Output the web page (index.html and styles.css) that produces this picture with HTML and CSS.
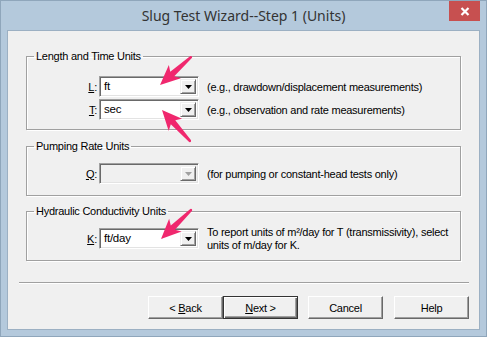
FILE: index.html
```html
<!DOCTYPE html>
<html lang="en">
<head>
<meta charset="UTF-8">
<title>Slug Test Wizard--Step 1 (Units)</title>
<link rel="stylesheet" href="styles.css">
</head>
<body>
<div class="window">
    <div class="titleBar">
        <span></span>
        <div class="title">Slug Test Wizard--Step 1 (Units)</div>
        <div class="closeBtn">
            <svg width="10" height="9" viewBox="0 0 10 9"><path d="M1.5,1 L8.5,8 M8.5,1 L1.5,8" stroke="#fff" stroke-width="2.2"/></svg>
        </div>
    </div>
    <div class="client">
        <!-- 길이/시간 단위 -->
        <fieldset class="group g1">
            <legend>Length and Time Units</legend>
            <div class="row">
                <span class="key"><u>L</u>:</span>
                <div class="combo"><span class="value">ft</span><span class="dropBtn"><svg width="7" height="4"><polygon points="0,0 7,0 3.5,4" class="tri"/></svg></span></div>
                <span class="hint">(e.g., drawdown/displacement measurements)</span>
            </div>
            <div class="row">
                <span class="key"><u>T</u>:</span>
                <div class="combo"><span class="value">sec</span><span class="dropBtn"><svg width="7" height="4"><polygon points="0,0 7,0 3.5,4" class="tri"/></svg></span></div>
                <span class="hint">(e.g., observation and rate measurements)</span>
            </div>
        </fieldset>
        <fieldset class="group g2">
            <legend>Pumping Rate Units</legend>
            <div class="row">
                <span class="key"><u>Q</u>:</span>
                <div class="combo disabled"><span class="value"></span><span class="dropBtn"><svg width="7" height="4"><polygon points="0,0 7,0 3.5,4" class="tri"/></svg></span></div>
                <span class="hint">(for pumping or constant-head tests only)</span>
            </div>
        </fieldset>
        <fieldset class="group g3">
            <legend>Hydraulic Conductivity Units</legend>
            <div class="row">
                <span class="key"><u>K</u>:</span>
                <div class="combo"><span class="value">ft/day</span><span class="dropBtn"><svg width="7" height="4"><polygon points="0,0 7,0 3.5,4" class="tri"/></svg></span></div>
                <span class="hint twoLine">To report units of m²/day for T (transmissivity), select<br>units of m/day for K.</span>
            </div>
        </fieldset>
        <div class="separator"></div>
        <div class="buttons">
            <button class="btn">&lt; <u>B</u>ack</button>
            <button class="btn default"><u>N</u>ext &gt;</button>
            <button class="btn cancel">Cancel</button>
            <button class="btn help">Help</button>
        </div>
    </div>
    <!-- 핑크 화살표 (덧그림) -->
    <svg class="arrows" width="487" height="337" viewBox="0 0 487 337">
        <path transform="translate(160,85) rotate(-42)" d="M0,0 L20,-9 L16.5,-3 L42,-1.3 Q44,0 42,1.3 L16.5,3 L20,9 Z"/>
        <path transform="translate(162,110) rotate(48)" d="M0,0 L20,-9 L16.5,-3 L42,-1.3 Q44,0 42,1.3 L16.5,3 L20,9 Z"/>
        <path transform="translate(161,239) rotate(-44)" d="M0,0 L20,-9 L16.5,-3 L42,-1.3 Q44,0 42,1.3 L16.5,3 L20,9 Z"/>
    </svg>
</div>
</body>
</html>
```
FILE: styles.css
```css
body{
    margin: 0;
}
.window{
    position: relative;
    width: 487px;
    height: 337px;
    box-sizing: border-box;
    border: 1px solid #8fa6bb;
    background-color: #b4c9dc;
    padding: 0 6px 6px;
    display: flex;
    flex-direction: column;
    font-family: "Liberation Sans", Arial, sans-serif;
    font-size: 11px;
    letter-spacing: -0.25px;
    color: #000;
}
.titleBar{
    height: 29px;
    display: grid;
    grid-template-columns: 31px 1fr 31px;
}
.title{
    text-align: center;
    line-height: 30px;
    font-family: "Noto Sans", "Open Sans", sans-serif;
    font-size: 14px;
    letter-spacing: 0;
    color: #333;
}
.closeBtn{
    height: 20px;
    background-color: #c75050;
    display: flex;
    align-items: center;
    justify-content: center;
}
.client{
    height: 300px;
    box-sizing: border-box;
    border: 1px solid #9cb0c3;
    background-color: #f0f0f0;
    padding: 0 10px 0 11px;
}
.group{
    width: 435px;
    box-sizing: border-box;
    margin: 0 0 0 7px;
    padding: 0;
    min-width: 0;
    border: 1px solid #a0a0a0;
    box-shadow: inset 1px 1px 0 #fff, 1px 1px 0 #fff;
}
.group legend{
    margin-left: 7px;
    padding: 0 2px;
    line-height: 14px;
}
.g1{
    margin-top: 18px;
    padding: 13px 0 9px;
}
.g2{
    margin-top: 9px;
    padding: 10px 0 11px;
}
.g3{
    margin-top: 8px;
    padding: 10px 0 11px;
}
.row{
    display: flex;
    align-items: center;
    height: 21px;
    padding-left: 40px;
}
.row + .row{
    margin-top: 2px;
}
.key{
    width: 30px;
    text-align: right;
    margin-right: 2px;
}
.combo{
    width: 100px;
    height: 21px;
    box-sizing: border-box;
    border: 1px solid;
    border-color: #a0a0a0 #fff #fff #a0a0a0;
    box-shadow: inset 1px 1px 0 #696969, inset -1px -1px 0 #e3e3e3;
    background-color: #fff;
    padding: 2px;
    display: flex;
    flex-shrink: 0;
}
.combo .value{
    flex: 1;
    padding-left: 2px;
    line-height: 15px;
    font-size: 11.5px;
}
.dropBtn{
    width: 16px;
    box-sizing: border-box;
    border: 1px solid;
    border-color: #f0f0f0 #696969 #696969 #f0f0f0;
    box-shadow: inset 1px 1px 0 #fff, inset -1px -1px 0 #a0a0a0;
    background-color: #f0f0f0;
    display: flex;
    align-items: center;
    justify-content: center;
}
.dropBtn svg{
    display: block;
}
.tri{
    fill: #000;
}
.combo.disabled{
    background-color: #f0f0f0;
}
.combo.disabled .tri{
    fill: #a0a0a0;
}
.hint{
    margin-left: 8px;
    white-space: nowrap;
}
.hint.twoLine{
    line-height: 13px;
}
.separator{
    margin-top: 21px;
    height: 1px;
    background-color: #a0a0a0;
    border-bottom: 1px solid #fff;
}
.buttons{
    display: flex;
    justify-content: flex-end;
    margin-top: 12px;
}
.btn{
    width: 75px;
    height: 23px;
    box-sizing: border-box;
    margin: 0;
    padding: 0;
    font-family: inherit;
    font-size: 11px;
    letter-spacing: -0.25px;
    color: #000;
    background-color: #f0f0f0;
    border: 1px solid;
    border-color: #fff #696969 #696969 #fff;
    box-shadow: inset -1px -1px 0 #a0a0a0;
}
.btn.default{
    border: 1px solid #333;
    box-shadow: inset 1px 1px 0 #fff, inset -1px -1px 0 #696969, inset -2px -2px 0 #a0a0a0;
}
.btn.cancel{
    margin-left: 10px;
}
.btn.help{
    margin-left: 11px;
}
.arrows{
    position: absolute;
    top: -1px;
    left: -1px;
    fill: #f0286e;
}
```
